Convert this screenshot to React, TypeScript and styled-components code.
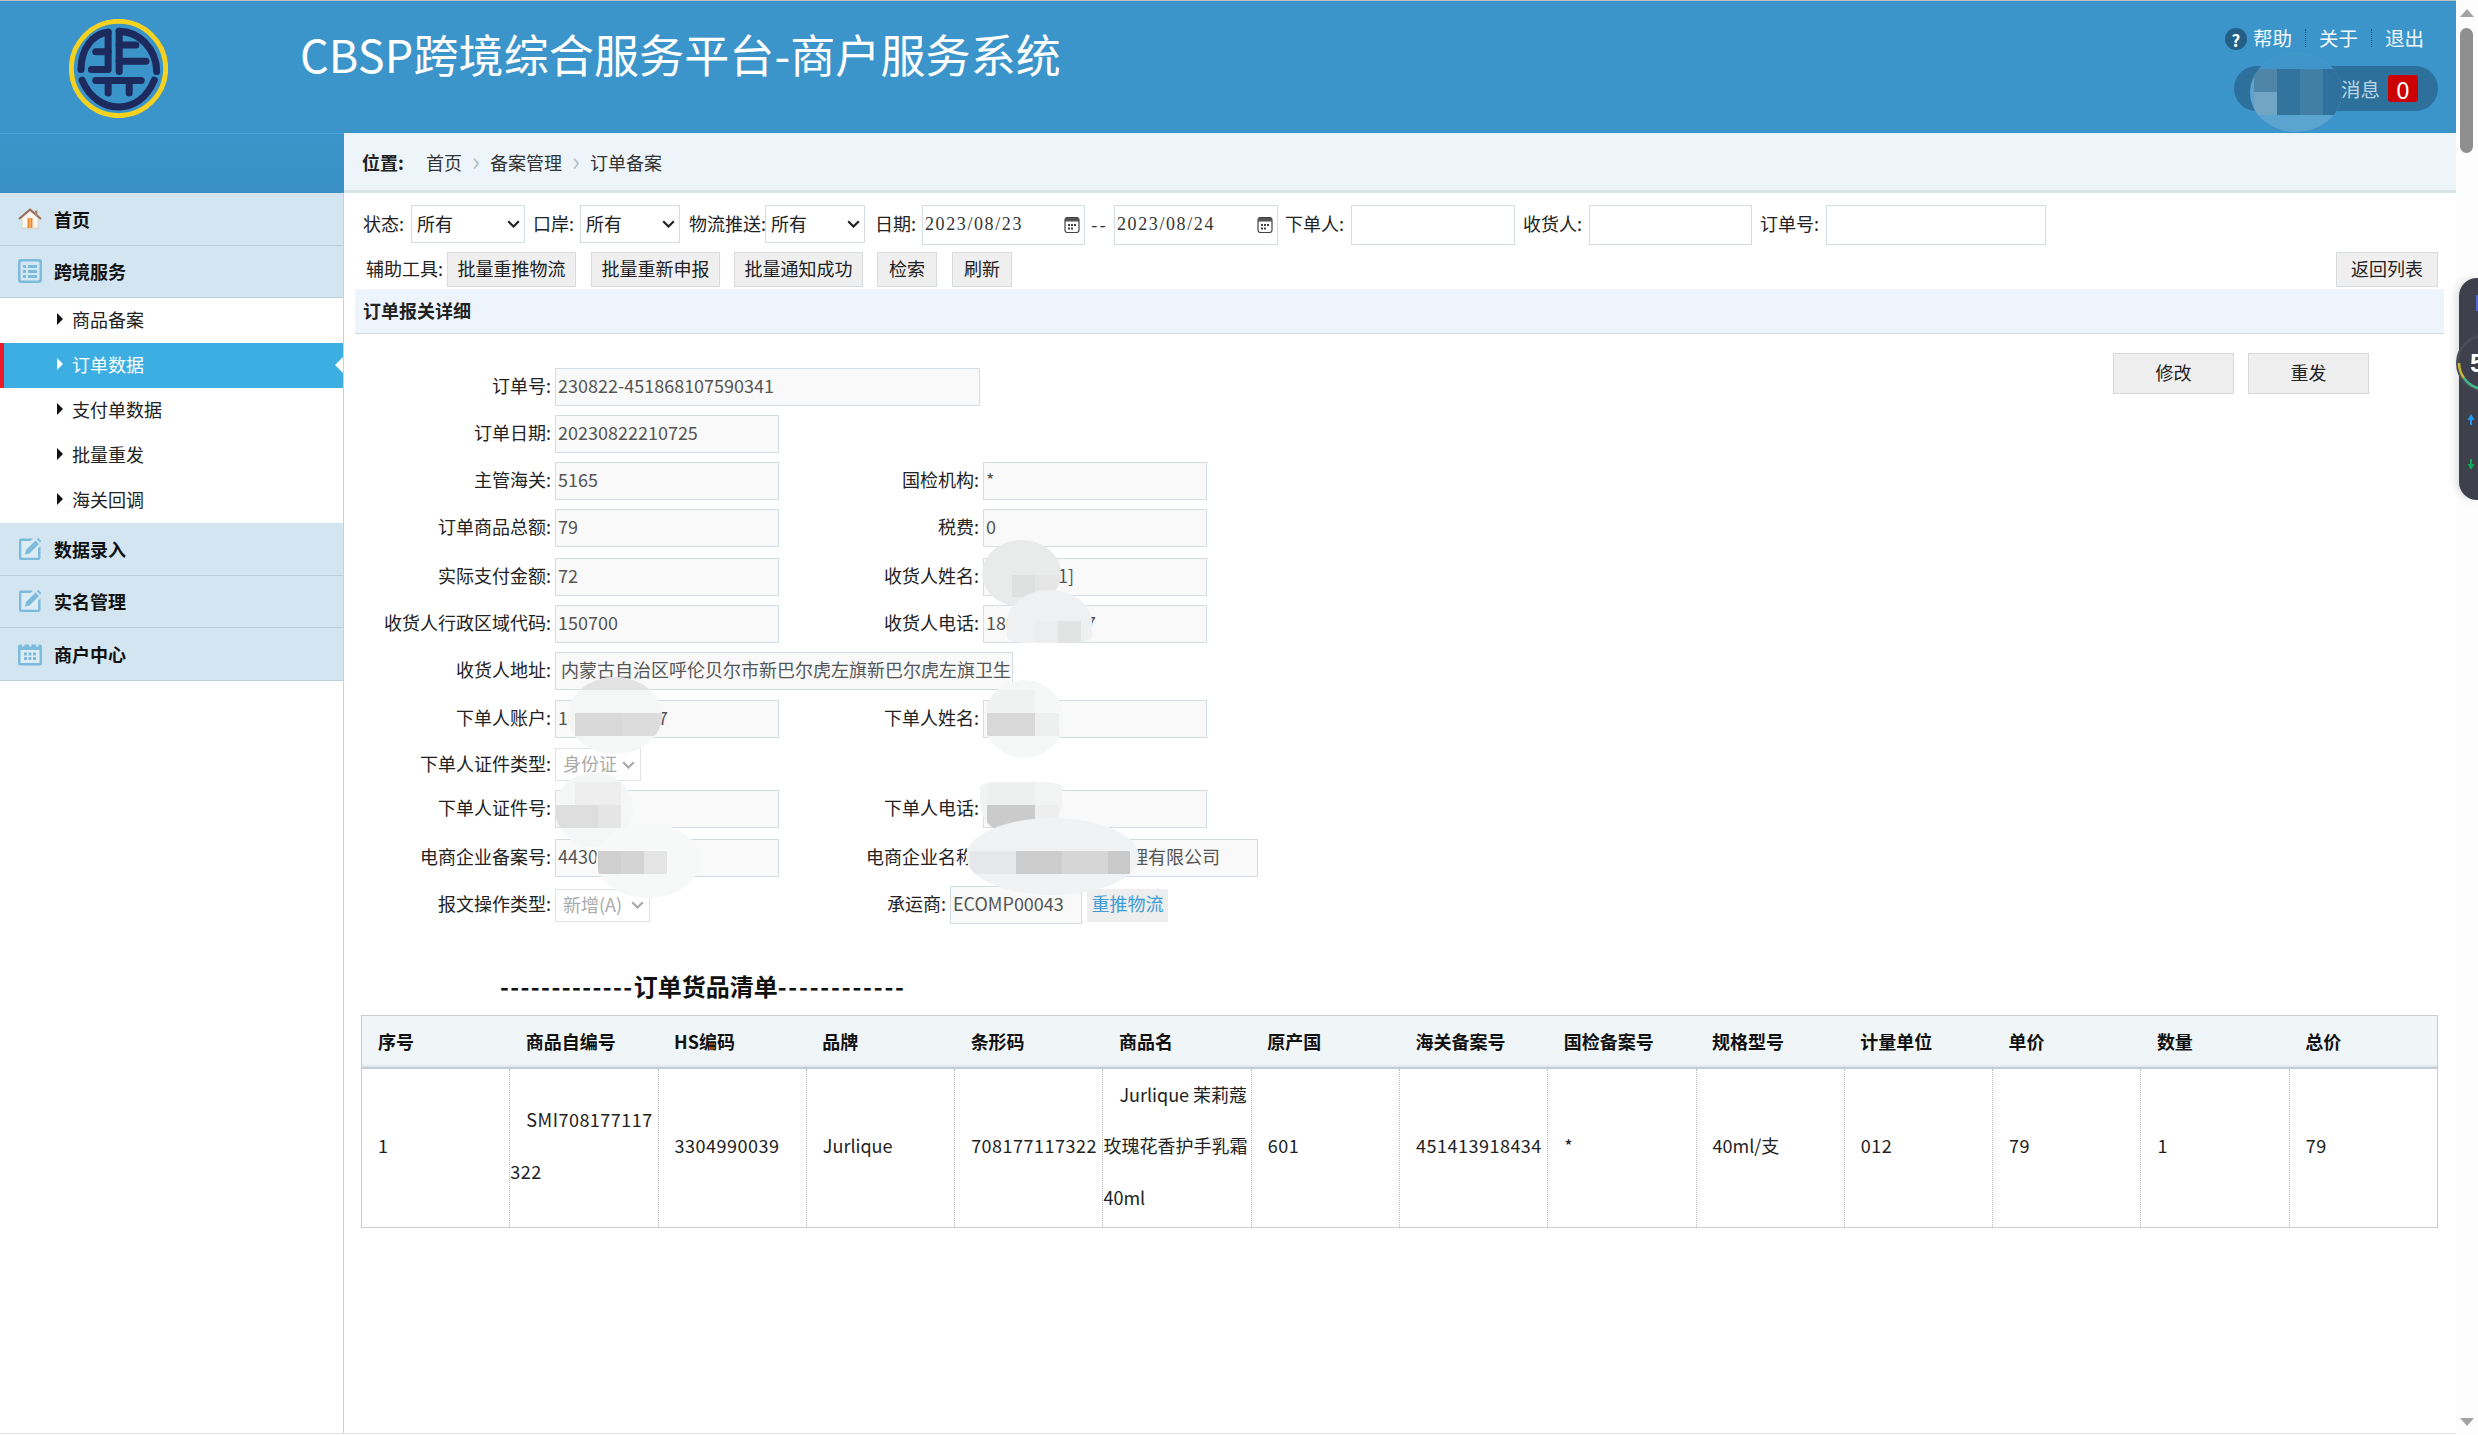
import React from 'react';
import styled, { createGlobalStyle } from 'styled-components';

const FONT = '"Noto Sans CJK SC", "Noto Sans", "Liberation Sans", sans-serif';

const chevron = (color: string) =>
  `url("data:image/svg+xml,%3Csvg xmlns='http://www.w3.org/2000/svg' width='13' height='8' viewBox='0 0 13 8'%3E%3Cpath d='M1.2 1.2 L6.5 6.5 L11.8 1.2' fill='none' stroke='${color}' stroke-width='2.2'/%3E%3C/svg%3E")`;

const GlobalStyle = createGlobalStyle`
  html, body {
    margin: 0;
    padding: 0;
    background: #fff;
    overflow: hidden;
  }
  * {
    box-sizing: border-box;
  }
`;

const filterButtons = [
  { text: '批量重推物流', w: 129, ml: 0 },
  { text: '批量重新申报', w: 129, ml: 15 },
  { text: '批量通知成功', w: 129, ml: 14 },
  { text: '检索', w: 60, ml: 14 },
  { text: '刷新', w: 60, ml: 15 },
];

const subItems = ['商品备案', '订单数据', '支付单数据', '批量重发', '海关回调'];

const columns = ['序号', '商品自编号', 'HS编码', '品牌', '条形码', '商品名', '原产国', '海关备案号', '国检备案号', '规格型号', '计量单位', '单价', '数量', '总价'];

// redaction blobs that sit over the form, in page coordinates
const smudges = [
  { x: 982, y: 540, w: 79, h: 67, bg: '#e9eaea', blocks: [{ x: 30, y: 35, w: 23, h: 22, c: '#dfe0e0' }, { x: 53, y: 35, w: 26, h: 22, c: '#e6e6e6' }] },
  { x: 1007, y: 590, w: 85, h: 53, bg: '#eff0f1', r: '50% 50% 24% 24% / 60% 60% 12% 12%', blocks: [{ x: 51, y: 31, w: 23, h: 22, c: '#e2e4e3' }, { x: 28, y: 31, w: 23, h: 22, c: '#ecedee' }] },
  { x: 568, y: 677, w: 94, h: 77, bg: '#f5f6f6', blocks: [{ x: 7, y: 36, w: 48, h: 23, c: '#d9d9d9' }, { x: 55, y: 36, w: 39, h: 23, c: '#dcdcdc' }, { x: 0, y: 0, w: 94, h: 13, c: '#e3e3e3' }] },
  { x: 984, y: 680, w: 80, h: 78, bg: '#f6f7f7', blocks: [{ x: 3, y: 33, w: 48, h: 23, c: '#d8d8d8' }, { x: 51, y: 33, w: 24, h: 23, c: '#eeefef' }, { x: 3, y: 10, w: 48, h: 23, c: '#f0f1f1' }] },
  { x: 555, y: 772, w: 78, h: 75, bg: '#f5f6f6', blocks: [{ x: 0, y: 33, w: 43, h: 23, c: '#dedede' }, { x: 43, y: 33, w: 23, h: 23, c: '#e5e5e5' }, { x: 20, y: 10, w: 46, h: 23, c: '#eeeeee' }] },
  { x: 980, y: 782, w: 82, h: 55, bg: '#f2f3f3', r: '20% 20% 50% 50% / 10% 10% 60% 60%', blocks: [{ x: 7, y: 23, w: 48, h: 23, c: '#cbcbcb' }, { x: 55, y: 23, w: 24, h: 23, c: '#eeeeee' }, { x: 7, y: 0, w: 48, h: 23, c: '#eeefef' }] },
  { x: 596, y: 823, w: 104, h: 75, bg: '#f7f8f8', blocks: [{ x: 2, y: 28, w: 23, h: 23, c: '#cfcfcf' }, { x: 25, y: 28, w: 23, h: 23, c: '#d4d4d4' }, { x: 48, y: 28, w: 23, h: 23, c: '#e4e4e4' }] },
  { x: 966, y: 818, w: 173, h: 77, bg: '#f1f2f3', blocks: [{ x: 4, y: 33, w: 46, h: 23, c: '#e6e7e8' }, { x: 50, y: 33, w: 46, h: 23, c: '#cccccc' }, { x: 96, y: 33, w: 46, h: 23, c: '#d6d6d6' }, { x: 142, y: 33, w: 22, h: 23, c: '#c9c9c9' }] },
  { x: 2250, y: 53, w: 92, h: 79, bg: '#5aa4cf', blocks: [{ x: 4, y: 16, w: 23, h: 23, c: '#4f86a8' }, { x: 27, y: 16, w: 23, h: 46, c: '#33749f' }, { x: 50, y: 16, w: 23, h: 46, c: '#427fa7' }, { x: 73, y: 16, w: 19, h: 46, c: '#2f719c' }, { x: 4, y: 39, w: 23, h: 23, c: '#72a4c3' }, { x: 0, y: 0, w: 92, h: 16, c: '#3f95c9' }] },
];

const Logo = () => (
  <svg width="99" height="99" viewBox="88 57 296 296">
    <circle cx="236" cy="205" r="141" fill="#3b94c9" stroke="#f5d21f" strokeWidth="15" />
    <g fill="none" stroke="#1c2a5e" strokeWidth="21" strokeLinecap="round" strokeLinejoin="round">
      <path d="M205 97 C160 100 124 145 124 208" />
      <path d="M205 97 V208 H155" />
      <path d="M205 155 H168" />
      <path d="M238 94 V214" />
      <path d="M238 94 C295 94 350 145 350 214" />
      <path d="M238 135 H288" />
      <path d="M238 183 H318" />
      <path d="M168 241 H304" />
      <path d="M205 241 V278" />
      <path d="M268 241 V278" />
      <path d="M127 240 C150 295 195 320 236 320 C280 320 320 295 343 240" />
    </g>
  </svg>
);

const HomeIcon = () => (
  <svg width="24" height="22" viewBox="0 0 24 22">
    <path d="M4 10 V20 H20 V10 L12 3 Z" fill="#fbf7f0" stroke="#d8d2c8" strokeWidth="0.8" />
    <path d="M1 11 L12 1.5 L23 11" fill="none" stroke="#9a6a55" strokeWidth="2" />
    <rect x="17" y="2.5" width="2.5" height="5" fill="#b08a78" />
    <rect x="9.5" y="10" width="5" height="10" fill="#ea8a33" />
    <rect x="11.5" y="10" width="1" height="10" fill="#f6c48d" />
    <rect x="3" y="20" width="18" height="1.5" fill="#d9d9d9" />
  </svg>
);

const ListIcon = () => (
  <svg width="24" height="24" viewBox="0 0 24 24">
    <rect x="0" y="0" width="24" height="24" rx="3" fill="#7dbbdd" />
    <rect x="2.5" y="2.5" width="19" height="19" rx="1.5" fill="#d3e7f3" />
    <g fill="#7dbbdd">
      <rect x="5" y="6" width="3" height="3" />
      <rect x="5" y="11" width="3" height="3" />
      <rect x="5" y="16" width="3" height="3" />
      <rect x="10" y="6" width="9" height="3" />
      <rect x="10" y="11" width="9" height="3" />
      <rect x="10" y="16" width="9" height="3" />
    </g>
  </svg>
);

const EditIcon = () => (
  <svg width="24" height="24" viewBox="0 0 24 24">
    <path d="M3 1.5 H15 L12.5 4 H3.5 V20.5 H20 V11.5 L22.5 9 V21 A2 2 0 0 1 20.5 23 H3 A2 2 0 0 1 1 21 V3.5 A2 2 0 0 1 3 1.5 Z" fill="#7dbbdd" />
    <rect x="3.5" y="4" width="16.5" height="16.5" fill="#dcebf4" />
    <path d="M7 17.5 L8 13 L17.5 3.5 L21 7 L11.5 16.5 Z" fill="#7dbbdd" />
    <path d="M18.8 2.2 L20.2 0.8 L23.4 4 L22 5.4 Z" fill="#7dbbdd" />
  </svg>
);

const CalendarIcon = () => (
  <svg width="24" height="24" viewBox="0 0 24 24">
    <rect x="0" y="2.5" width="24" height="21" rx="2.5" fill="#7dbbdd" />
    <rect x="2.5" y="8" width="19" height="13" fill="#dcebf4" />
    <g fill="#d3e5f0">
      <rect x="4" y="0.5" width="2.5" height="4" />
      <rect x="11" y="0.5" width="2.5" height="4" />
      <rect x="18" y="0.5" width="2.5" height="4" />
    </g>
    <g fill="#7dbbdd">
      <rect x="6" y="10.5" width="3" height="3" />
      <rect x="10.5" y="10.5" width="3" height="3" />
      <rect x="15" y="10.5" width="3" height="3" />
      <rect x="6" y="15" width="3" height="3" />
      <rect x="10.5" y="15" width="3" height="3" />
      <rect x="15" y="15" width="3" height="3" />
    </g>
  </svg>
);

const PickerIcon = () => (
  <svg width="16" height="16" viewBox="0 0 16 16">
    <rect x="1" y="0.5" width="14" height="15" rx="2.5" fill="#fff" stroke="#444" strokeWidth="1.2" />
    <rect x="1" y="1" width="14" height="3.5" fill="#555" />
    <g fill="#444">
      <rect x="4" y="7" width="2" height="2" />
      <rect x="7" y="7" width="2" height="2" />
      <rect x="10" y="7" width="2" height="2" />
      <rect x="4" y="10.5" width="2" height="2" />
      <rect x="7" y="10.5" width="2" height="2" />
    </g>
  </svg>
);

const DateField: React.FC<{ value: string; w: number }> = ({ value, w }) => (
  <DateBox $w={w}>
    <DateText>{value}</DateText>
    <PickerIcon />
  </DateBox>
);

const App: React.FC = () => {
  return (
    <Page>
      <GlobalStyle />
      <Main>
        <Header>
          <LogoWrap>
            <Logo />
          </LogoWrap>
          <Title>CBSP跨境综合服务平台-商户服务系统</Title>
          <HeaderRight>
            <HeaderLinks>
              <HelpDot>?</HelpDot>
              <HeaderLink>帮助</HeaderLink>
              <LinkSep />
              <HeaderLink>关于</HeaderLink>
              <LinkSep />
              <HeaderLink>退出</HeaderLink>
            </HeaderLinks>
            <MessagePill>
              <MessageText>消息</MessageText>
              <MessageBadge>0</MessageBadge>
            </MessagePill>
          </HeaderRight>
        </Header>

        <Body>
          <Sidebar>
            <SideTop />
            <MainItem>
              <SideIcon><HomeIcon /></SideIcon>
              首页
            </MainItem>
            <MainItem>
              <SideIcon><ListIcon /></SideIcon>
              跨境服务
            </MainItem>
            {subItems.map((item) => (
              <SubItem key={item} $active={item === '订单数据'}>
                <Caret $active={item === '订单数据'} />
                {item}
              </SubItem>
            ))}
            <MainItem>
              <SideIcon><EditIcon /></SideIcon>
              数据录入
            </MainItem>
            <MainItem>
              <SideIcon><EditIcon /></SideIcon>
              实名管理
            </MainItem>
            <MainItem>
              <SideIcon><CalendarIcon /></SideIcon>
              商户中心
            </MainItem>
          </Sidebar>

          <Content>
            <Breadcrumb>
              <CrumbTitle>位置:</CrumbTitle>
              <Crumb>首页</Crumb>
              <CrumbSep>›</CrumbSep>
              <Crumb>备案管理</Crumb>
              <CrumbSep>›</CrumbSep>
              <Crumb>订单备案</Crumb>
            </Breadcrumb>

            <FilterRow>
              <FilterLabel $w={48}>状态:</FilterLabel>
              <FilterSelect $w={114}><option>所有</option></FilterSelect>
              <FilterLabel $w={47} $ml={8}>口岸:</FilterLabel>
              <FilterSelect $w={100}><option>所有</option></FilterSelect>
              <FilterLabel $w={76} $ml={9}>物流推送:</FilterLabel>
              <FilterSelect $w={100}><option>所有</option></FilterSelect>
              <FilterLabel $w={47} $ml={10}>日期:</FilterLabel>
              <DateField value="2023/08/23" w={163} />
              <DateDash>--</DateDash>
              <DateField value="2023/08/24" w={164} />
              <FilterLabel $w={66} $ml={7}>下单人:</FilterLabel>
              <FilterInput $w={164} />
              <FilterLabel $w={66} $ml={8}>收货人:</FilterLabel>
              <FilterInput $w={163} />
              <FilterLabel $w={66} $ml={8}>订单号:</FilterLabel>
              <FilterInput $w={220} />
            </FilterRow>

            <ToolRow>
              <ToolLabel>辅助工具:</ToolLabel>
              {filterButtons.map((btn) => (
                <GrayButton key={btn.text} $w={btn.w} $ml={btn.ml}>{btn.text}</GrayButton>
              ))}
              <BackButton $w={102}>返回列表</BackButton>
            </ToolRow>

            <SectionBar>订单报关详细</SectionBar>

            <FormArea>
              <Form>
                <FormRow $mt={0}>
                  <FieldLabel>订单号:</FieldLabel>
                  <ReadInput $w={425} readOnly value="230822-451868107590341" />
                </FormRow>
                <FormRow>
                  <FieldLabel>订单日期:</FieldLabel>
                  <ReadInput readOnly value="20230822210725" />
                </FormRow>
                <FormRow>
                  <FieldLabel>主管海关:</FieldLabel>
                  <FieldSlot><ReadInput readOnly value="5165" /></FieldSlot>
                  <FieldLabel $w={205}>国检机构:</FieldLabel>
                  <ReadInput readOnly value="*" />
                </FormRow>
                <FormRow>
                  <FieldLabel>订单商品总额:</FieldLabel>
                  <FieldSlot><ReadInput readOnly value="79" /></FieldSlot>
                  <FieldLabel $w={205}>税费:</FieldLabel>
                  <ReadInput readOnly value="0" />
                </FormRow>
                <FormRow $mt={11}>
                  <FieldLabel>实际支付金额:</FieldLabel>
                  <FieldSlot><ReadInput readOnly value="72" /></FieldSlot>
                  <FieldLabel $w={205}>收货人姓名:</FieldLabel>
                  <ReadInput readOnly value="＊＊＊＊1]" />
                </FormRow>
                <FormRow>
                  <FieldLabel>收货人行政区域代码:</FieldLabel>
                  <FieldSlot><ReadInput readOnly value="150700" /></FieldSlot>
                  <FieldLabel $w={205}>收货人电话:</FieldLabel>
                  <ReadInput readOnly value="18000000007" />
                </FormRow>
                <FormRow>
                  <FieldLabel>收货人地址:</FieldLabel>
                  <ReadInput $w={458} $pl={5} readOnly value="内蒙古自治区呼伦贝尔市新巴尔虎左旗新巴尔虎左旗卫生院" />
                </FormRow>
                <FormRow $mt={10}>
                  <FieldLabel>下单人账户:</FieldLabel>
                  <FieldSlot><ReadInput readOnly value="10000000007" /></FieldSlot>
                  <FieldLabel $w={205}>下单人姓名:</FieldLabel>
                  <ReadInput readOnly value="＊＊" />
                </FormRow>
                <FormRow $mt={10}>
                  <FieldLabel>下单人证件类型:</FieldLabel>
                  <FormSelect $w={86} disabled><option>身份证</option></FormSelect>
                </FormRow>
                <FormRow>
                  <FieldLabel>下单人证件号:</FieldLabel>
                  <FieldSlot><ReadInput readOnly value="＊＊＊" /></FieldSlot>
                  <FieldLabel $w={205}>下单人电话:</FieldLabel>
                  <ReadInput readOnly value="＊＊" />
                </FormRow>
                <FormRow $mt={11}>
                  <FieldLabel>电商企业备案号:</FieldLabel>
                  <FieldSlot><ReadInput readOnly value="4430＊＊＊" /></FieldSlot>
                  <FieldLabel $w={205}>电商企业名称:</FieldLabel>
                  <ReadInput $w={275} readOnly value="＊＊＊＊＊＊＊＊理有限公司" />
                </FormRow>
                <FormRow>
                  <FieldLabel>报文操作类型:</FieldLabel>
                  <FieldSlot><FormSelect $w={95} disabled><option>新增(A)</option></FormSelect></FieldSlot>
                  <FieldLabel $w={172}>承运商:</FieldLabel>
                  <ReadInput $w={132} readOnly value="ECOMP00043" />
                  <PushButton>重推物流</PushButton>
                </FormRow>
              </Form>
              <FormActions>
                <ActionButton>修改</ActionButton>
                <ActionButton>重发</ActionButton>
              </FormActions>
            </FormArea>

            <ListTitle>
              <Dashes $ls={1.4}>-------------</Dashes>订单货品清单<Dashes $ls={1.8}>------------</Dashes>
            </ListTitle>

            <GoodsTable>
              <thead>
                <tr>
                  {columns.map((col) => (
                    <th key={col}>{col}</th>
                  ))}
                </tr>
              </thead>
              <tbody>
                <tr>
                  <td>1</td>
                  <NumCell>SMI708177117<br />322</NumCell>
                  <NumCell>3304990039</NumCell>
                  <td>Jurlique</td>
                  <NumCell>708177117322</NumCell>
                  <td>Jurlique 茉莉蔻<br />玫瑰花香护手乳霜<br />40ml</td>
                  <NumCell>601</NumCell>
                  <NumCell>451413918434</NumCell>
                  <td>*</td>
                  <td>40ml/支</td>
                  <NumCell>012</NumCell>
                  <NumCell>79</NumCell>
                  <NumCell>1</NumCell>
                  <NumCell>79</NumCell>
                </tr>
              </tbody>
            </GoodsTable>
          </Content>
        </Body>
      </Main>

      <ScrollTrack>
        <ScrollArrowUp />
        <ScrollThumb />
        <ScrollArrowDown />
      </ScrollTrack>

      <SideWidget>
        <svg width="30" height="222" viewBox="0 0 30 222">
          <circle cx="29" cy="85" r="27.5" fill="#3e404c" stroke="#4a4c58" strokeWidth="3" />
          <path d="M3 85 A26 26 0 0 0 8 100" fill="none" stroke="#c8b93a" strokeWidth="2.5" />
          <path d="M8 100 A26 26 0 0 0 29 111" fill="none" stroke="#3fb98d" strokeWidth="2.5" />
          <text x="14" y="94" fill="#fff" fontSize="26" fontWeight="700" fontFamily="Liberation Sans">5</text>
          <path d="M15 136 L18.5 142 H16 V147 H14 V142 H11.5 Z" fill="#1e9bf0" />
          <path d="M15 192 L18.5 186 H16 V181 H14 V186 H11.5 Z" fill="#0fa958" />
        </svg>
        <WidgetTag />
      </SideWidget>

      {smudges.map((s) => (
        <Smudge key={`${s.x}-${s.y}`} $x={s.x} $y={s.y} $w={s.w} $h={s.h} $bg={s.bg} $r={s.r}>
          {s.blocks.map((b) => (
            <SmudgeBlock key={`${b.x}-${b.y}`} $x={b.x} $y={b.y} $w={b.w} $h={b.h} $c={b.c} />
          ))}
        </Smudge>
      ))}
    </Page>
  );
};

export default App;

// Styled Components
const Page = styled.div`
  position: relative;
  display: flex;
  width: 2478px;
  height: 1435px;
  overflow: hidden;
  font-family: ${FONT};
  font-size: 18px;
  color: #222;
  background: #fff;
`;

const Main = styled.div`
  display: flex;
  flex-direction: column;
  width: 2456px;
  height: 1434px;
  border-bottom: 1px solid #e2e2e2;
`;

const Header = styled.header`
  display: flex;
  flex-shrink: 0;
  height: 133px;
  background: #3c95ca;
  border-top: 1px solid #bdbdbd;
`;

const LogoWrap = styled.div`
  display: flex;
  align-items: flex-start;
  margin: 18px 0 0 69px;
`;

const Title = styled.h1`
  margin: 22px 0 0 132px;
  font-size: 45px;
  font-weight: 400;
  line-height: 62px;
  letter-spacing: 0.13px;
  color: #fff;
  white-space: nowrap;
`;

const HeaderRight = styled.div`
  display: flex;
  flex-direction: column;
  align-items: flex-end;
  margin-left: auto;
  padding: 25px 18px 0 0;
`;

const HeaderLinks = styled.div`
  display: flex;
  align-items: center;
  height: 24px;
  padding-right: 14px;
`;

const HelpDot = styled.span`
  display: flex;
  align-items: center;
  justify-content: center;
  width: 22px;
  height: 22px;
  margin: 2px 6px 0 0;
  border-radius: 50%;
  background: #245f85;
  color: #fff;
  font-size: 17px;
  font-weight: 700;
`;

const HeaderLink = styled.span`
  font-size: 19.5px;
  line-height: 24px;
  color: #f2f8fc;
`;

const LinkSep = styled.span`
  width: 0;
  height: 18px;
  margin: 0 13px;
  border-left: 1px dotted #1f4f70;
`;

const MessagePill = styled.div`
  display: flex;
  align-items: center;
  justify-content: flex-end;
  width: 204px;
  height: 45px;
  margin-top: 16px;
  padding-right: 20px;
  border-radius: 23px;
  background: #2d709c;
`;

const MessageText = styled.span`
  font-size: 19.5px;
  color: #bcd5e4;
`;

const MessageBadge = styled.span`
  display: flex;
  align-items: center;
  justify-content: center;
  width: 30px;
  height: 27px;
  margin-left: 8px;
  border-radius: 3px;
  background: #cc0000;
  color: #fff;
  font-size: 24px;
`;

const Body = styled.div`
  display: flex;
  flex: 1;
  min-height: 0;
`;

const Sidebar = styled.nav`
  flex-shrink: 0;
  width: 344px;
  border-right: 1px solid #bcd5de;
`;

const SideTop = styled.div`
  height: 60px;
  margin-right: -1px;
  border-top: 1px solid #4ba3dc;
  background: linear-gradient(#3c95ca, #3a90c5);
`;

const MainItem = styled.div`
  display: flex;
  align-items: center;
  height: 52.5px;
  padding-left: 18px;
  background: #d3e5f0;
  border-bottom: 1px solid #bccfd9;
  font-size: 18px;
  font-weight: 700;
  color: #111;
`;

const SideIcon = styled.span`
  display: flex;
  align-items: center;
  justify-content: center;
  width: 24px;
  margin-right: 12px;
`;

const SubItem = styled.div<{ $active?: boolean }>`
  position: relative;
  display: flex;
  align-items: center;
  height: 45px;
  padding: 0 0 3px 57px;
  font-size: 18px;
  color: ${(p) => (p.$active ? '#fff' : '#222')};
  background: ${(p) => (p.$active ? '#3daee2' : '#fff')};
  ${(p) => p.$active && 'box-shadow: inset 4px 0 0 #ed1c24;'}

  &::after {
    content: '';
    display: ${(p) => (p.$active ? 'block' : 'none')};
    position: absolute;
    right: 0;
    top: 14px;
    border-top: 8px solid transparent;
    border-bottom: 8px solid transparent;
    border-right: 8px solid #fff;
  }
`;

const Caret = styled.span<{ $active?: boolean }>`
  width: 0;
  height: 0;
  margin-right: 9px;
  border-top: 6px solid transparent;
  border-bottom: 6px solid transparent;
  border-left: 6px solid ${(p) => (p.$active ? '#fff' : '#111')};
`;

const Content = styled.main`
  flex: 1;
  min-width: 0;
`;

const Breadcrumb = styled.div`
  display: flex;
  align-items: center;
  height: 60px;
  padding-left: 18px;
  background: #edf5fb;
  border-bottom: 3px solid #d7e4ea;
`;

const CrumbTitle = styled.strong`
  width: 64px;
  font-weight: 700;
  color: #222;
`;

const Crumb = styled.span`
  color: #333;
`;

const CrumbSep = styled.span`
  width: 28px;
  padding-bottom: 4px;
  text-align: center;
  color: #b5bdc2;
  font-size: 26px;
  line-height: 1;
`;

const FilterRow = styled.div`
  display: flex;
  align-items: center;
  height: 40px;
  margin-top: 12px;
  padding-left: 19px;
`;

const FilterLabel = styled.span<{ $w: number; $ml?: number }>`
  flex-shrink: 0;
  width: ${(p) => p.$w}px;
  margin-left: ${(p) => p.$ml || 0}px;
  padding-bottom: 4px;
  white-space: nowrap;
  color: #222;
`;

const FilterSelect = styled.select<{ $w: number }>`
  flex-shrink: 0;
  width: ${(p) => p.$w}px;
  height: 38px;
  margin-top: -2px;
  padding: 0 18px 3px 5px;
  border: 1px solid #d5dde2;
  border-radius: 0;
  appearance: none;
  background: #fff ${chevron('%23222')} no-repeat right 4px center;
  font-family: ${FONT};
  font-size: 18px;
  color: #222;
`;

const DateBox = styled.div<{ $w: number }>`
  display: flex;
  flex-shrink: 0;
  align-items: center;
  justify-content: space-between;
  width: ${(p) => p.$w}px;
  height: 40px;
  padding: 0 4px 0 2px;
  border: 1px solid #d5dde2;
`;

const DateText = styled.span`
  padding-bottom: 2px;
  font-family: "Liberation Serif", serif;
  font-size: 18px;
  letter-spacing: 1.6px;
  color: #333;
`;

const DateDash = styled.span`
  width: 29px;
  padding-bottom: 3px;
  text-align: center;
  letter-spacing: 2px;
  color: #333;
`;

const FilterInput = styled.input<{ $w: number }>`
  flex-shrink: 0;
  width: ${(p) => p.$w}px;
  height: 40px;
  border: 1px solid #d5dde2;
  background: #fff;
`;

const ToolRow = styled.div`
  display: flex;
  align-items: center;
  height: 35px;
  margin-top: 7px;
  padding: 0 18px 0 22px;
`;

const ToolLabel = styled.span`
  width: 81px;
  padding-bottom: 3px;
  white-space: nowrap;
  color: #222;
`;

const GrayButton = styled.button<{ $w: number; $ml?: number }>`
  width: ${(p) => p.$w}px;
  height: 35px;
  margin-left: ${(p) => p.$ml || 0}px;
  padding: 0 0 3px;
  border: 1px solid #d7dcdf;
  background: #efefef;
  font-family: ${FONT};
  font-size: 18px;
  color: #222;
`;

const BackButton = styled(GrayButton)`
  margin-left: auto;
`;

const SectionBar = styled.div`
  display: flex;
  align-items: center;
  width: 2089px;
  height: 45px;
  margin: 2px 0 0 11px;
  padding: 0 0 3px 8px;
  background: #edf4fb;
  border-bottom: 1px solid #d3dde3;
  font-weight: 700;
  color: #222;
`;

const FormArea = styled.div`
  display: flex;
  justify-content: space-between;
  padding: 19px 87px 0 11px;
`;

const Form = styled.div`
  padding-top: 15px;
`;

const FormRow = styled.div<{ $mt?: number }>`
  display: flex;
  align-items: center;
  margin-top: ${(p) => (p.$mt === undefined ? 9 : p.$mt)}px;
`;

const FieldLabel = styled.label<{ $w?: number }>`
  flex-shrink: 0;
  width: ${(p) => p.$w || 200}px;
  padding: 0 4px 4px 0;
  text-align: right;
  white-space: nowrap;
  color: #222;
`;

const FieldSlot = styled.div`
  display: flex;
  width: 223px;
`;

const ReadInput = styled.input<{ $w?: number; $pl?: number }>`
  flex-shrink: 0;
  width: ${(p) => p.$w || 224}px;
  height: 38px;
  padding: 0 0 5px ${(p) => p.$pl || 2}px;
  border: 1px solid #d3dde3;
  background: #f9f9f9;
  font-family: ${FONT};
  font-size: 18px;
  color: #555;
  outline: none;
`;

const FormSelect = styled.select<{ $w: number }>`
  width: ${(p) => p.$w}px;
  height: 33px;
  padding: 0 16px 3px 7px;
  border: 1px solid #dde3e7;
  border-radius: 0;
  appearance: none;
  background: #fff ${chevron('%23aaa')} no-repeat right 5px center;
  opacity: 1;
  font-family: ${FONT};
  font-size: 18px;
  color: #aaa;
`;

const PushButton = styled.button`
  width: 81px;
  height: 33px;
  margin-left: 5px;
  padding: 0 0 4px;
  border: none;
  background: #eee;
  font-family: ${FONT};
  font-size: 18px;
  color: #3d9bd5;
`;

const FormActions = styled.div`
  display: flex;
  gap: 14px;
`;

const ActionButton = styled.button`
  width: 121px;
  height: 41px;
  padding: 0 0 3px;
  border: 1px solid #d5d9db;
  background: #efefef;
  font-family: ${FONT};
  font-size: 18px;
  color: #222;
`;

const ListTitle = styled.div`
  height: 30px;
  margin: 47px 0 0 156px;
  font-size: 24px;
  font-weight: 700;
  line-height: 30px;
  white-space: nowrap;
  color: #111;
`;

const Dashes = styled.span<{ $ls: number }>`
  letter-spacing: ${(p) => p.$ls}px;
`;

const GoodsTable = styled.table`
  width: 2077px;
  margin: 14px 0 0 17px;
  border: 1px solid #c9ced1;
  border-collapse: collapse;
  table-layout: fixed;

  th {
    height: 52px;
    padding: 0 0 0 16px;
    background: #f0f5f8;
    border-bottom: 2px solid #c3ced4;
    box-shadow: inset 0 -3px 3px -2px #d5dde1;
    font-size: 18px;
    font-weight: 700;
    text-align: left;
    white-space: nowrap;
    color: #111;
  }

  td {
    height: 158px;
    padding: 0 0 3px;
    border-left: 1px dotted #bbb;
    font-size: 18px;
    line-height: 51.7px;
    text-indent: 16px;
    white-space: nowrap;
    overflow: hidden;
    color: #222;
  }

  td:first-child {
    border-left: none;
  }
`;

const NumCell = styled.td`
  letter-spacing: 0.5px;
`;

const ScrollTrack = styled.div`
  position: relative;
  width: 22px;
  height: 1435px;
  background: #fdfdfd;
`;

const ScrollArrowUp = styled.span`
  position: absolute;
  left: 4px;
  top: 9px;
  border-left: 7px solid transparent;
  border-right: 7px solid transparent;
  border-bottom: 8px solid #a3a3a3;
`;

const ScrollArrowDown = styled.span`
  position: absolute;
  left: 4px;
  bottom: 9px;
  border-left: 7px solid transparent;
  border-right: 7px solid transparent;
  border-top: 8px solid #a3a3a3;
`;

const ScrollThumb = styled.span`
  position: absolute;
  left: 4px;
  top: 28px;
  width: 13px;
  height: 125px;
  border-radius: 7px;
  background: #8f8f8f;
`;

const SideWidget = styled.div`
  position: absolute;
  left: 2459px;
  top: 278px;
  width: 19px;
  height: 222px;
  border-radius: 18px 0 0 18px;
  background: #3e404c;
  box-shadow: -3px 0 8px rgba(0, 0, 0, 0.12);

  svg {
    display: block;
    margin-left: -3px;
    overflow: visible;
  }
`;

const WidgetTag = styled.span`
  position: absolute;
  right: 0;
  top: 17px;
  width: 2px;
  height: 16px;
  background: #4a6bd0;
`;

const Smudge = styled.div<{ $x: number; $y: number; $w: number; $h: number; $bg: string; $r?: string }>`
  position: absolute;
  left: ${(p) => p.$x}px;
  top: ${(p) => p.$y}px;
  width: ${(p) => p.$w}px;
  height: ${(p) => p.$h}px;
  border-radius: ${(p) => p.$r || '50%'};
  overflow: hidden;
  background: ${(p) => p.$bg};
`;

const SmudgeBlock = styled.span<{ $x: number; $y: number; $w: number; $h: number; $c: string }>`
  position: absolute;
  left: ${(p) => p.$x}px;
  top: ${(p) => p.$y}px;
  width: ${(p) => p.$w}px;
  height: ${(p) => p.$h}px;
  background: ${(p) => p.$c};
`;
